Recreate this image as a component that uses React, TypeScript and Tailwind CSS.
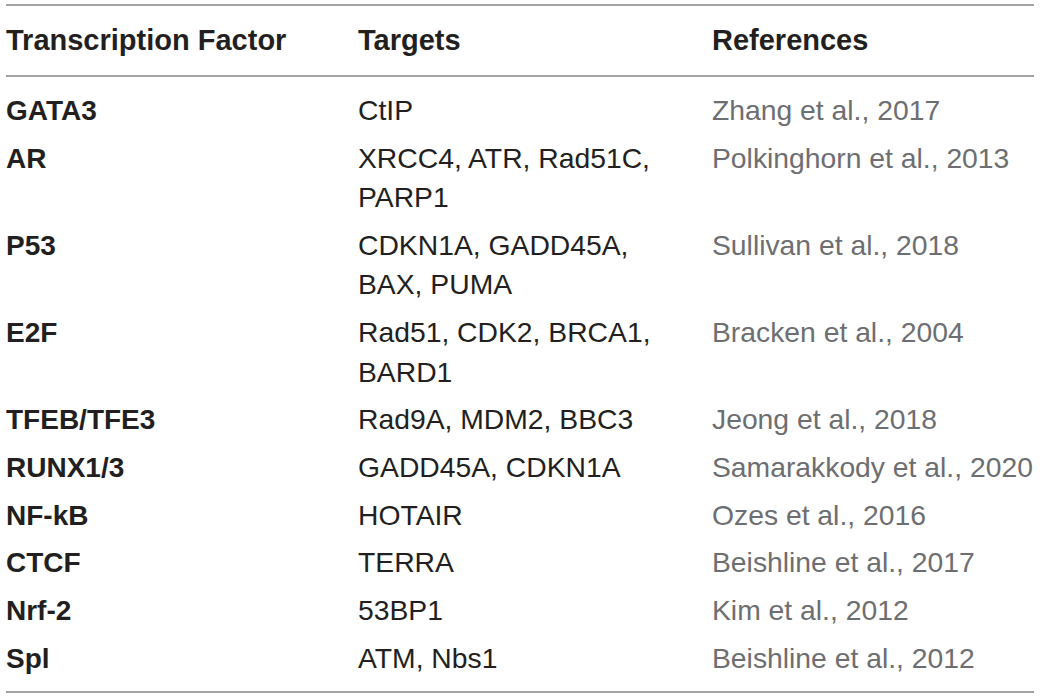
const rows: { factor: string; targets: string[]; ref: string }[] = [
  { factor: "GATA3", targets: ["CtIP"], ref: "Zhang et al., 2017" },
  { factor: "AR", targets: ["XRCC4, ATR, Rad51C,", "PARP1"], ref: "Polkinghorn et al., 2013" },
  { factor: "P53", targets: ["CDKN1A, GADD45A,", "BAX, PUMA"], ref: "Sullivan et al., 2018" },
  { factor: "E2F", targets: ["Rad51, CDK2, BRCA1,", "BARD1"], ref: "Bracken et al., 2004" },
  { factor: "TFEB/TFE3", targets: ["Rad9A, MDM2, BBC3"], ref: "Jeong et al., 2018" },
  { factor: "RUNX1/3", targets: ["GADD45A, CDKN1A"], ref: "Samarakkody et al., 2020" },
  { factor: "NF-kB", targets: ["HOTAIR"], ref: "Ozes et al., 2016" },
  { factor: "CTCF", targets: ["TERRA"], ref: "Beishline et al., 2017" },
  { factor: "Nrf-2", targets: ["53BP1"], ref: "Kim et al., 2012" },
  { factor: "Spl", targets: ["ATM, Nbs1"], ref: "Beishline et al., 2012" },
];

export default function App() {
  return (
    <div
      className="w-[1040px] h-[698px] bg-white pt-[4px] px-[6px]"
      style={{ fontFamily: '"Liberation Sans", Arial, sans-serif' }}
    >
      <div className="w-[1028px] border-t-2 border-b-2 border-[#a3a3a3]">
        {/* Header */}
        <div className="grid grid-cols-[352px_354px_1fr] h-[71px] items-center border-b-2 border-[#a3a3a3] text-[29px] font-bold text-[#231f20] whitespace-nowrap">
          <div>Transcription Factor</div>
          <div>Targets</div>
          <div>References</div>
        </div>

        {/* Body */}
        <div className="pt-[10px] pb-[9px]">
          {rows.map((r) => (
            <div
              key={r.factor}
              className="grid grid-cols-[352px_354px_1fr] py-[4.1px] text-[28.3px] leading-[39.5px]"
            >
              <div className="font-bold text-[28px] text-[#231f20]">{r.factor}</div>
              <div className="text-[#231f20] whitespace-nowrap">
                {r.targets.map((t) => (
                  <div key={t}>{t}</div>
                ))}
              </div>
              <div className="text-[#6d6e71] whitespace-nowrap">{r.ref}</div>
            </div>
          ))}
        </div>
      </div>
    </div>
  );
}
